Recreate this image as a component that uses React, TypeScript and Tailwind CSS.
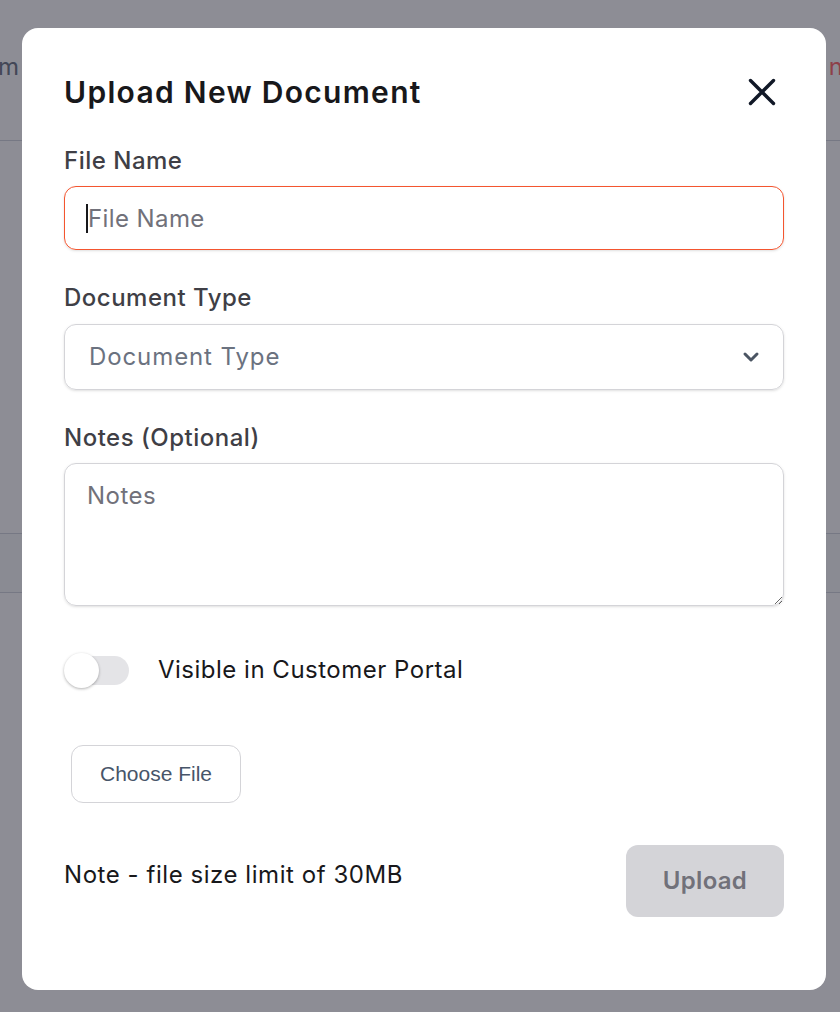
import React from 'react';
import { ChevronDown } from 'lucide-react';

const font = { fontFamily: 'Inter, "Noto Sans", sans-serif' };

export default function App() {
  return (
    <div className="relative w-[840px] h-[1012px] overflow-hidden bg-white" style={font}>
      {/* Page behind the overlay */}
      <div className="flex flex-col h-full">
        <div className="h-[141px] border-b border-gray-300 flex justify-between items-start pt-[52px]">
          <span className="text-[24px] text-gray-500 -ml-[2px] leading-[30px]">m</span>
          <span className="text-[24px] text-red-400 -mr-[3px] leading-[30px]">n</span>
        </div>
        <div className="h-[393px] border-b border-gray-300" />
        <div className="h-[59px] border-b border-gray-300 bg-gray-50" />
        <div className="flex-1" />
      </div>

      {/* Overlay */}
      <div className="absolute inset-0 bg-[#1c1c2b]/50 flex justify-start pl-[22px] pt-[28px]">
        <div className="w-[804px] h-[962px] bg-white rounded-[16px] px-[42px] pt-[46px] flex flex-col">
          {/* Header */}
          <div className="flex items-center justify-between">
            <h2 className="text-[30px] leading-[36px] font-semibold text-[#18181b] tracking-[1.3px]">
              Upload New Document
            </h2>
            <button className="mr-[7px] text-[#111827]">
              <svg width="30" height="30" viewBox="0 0 30 30" fill="none" stroke="currentColor" strokeWidth="3.4" strokeLinecap="round">
                <path d="M3.5 3.5 L26.5 26.5 M26.5 3.5 L3.5 26.5" />
              </svg>
            </button>
          </div>

          {/* File name */}
          <label className="mt-[37px] text-[24px] leading-[28px] font-medium text-[#3f3f46] tracking-[0.5px]">File Name</label>
          <div className="relative mt-[11px]">
            <input
              className="w-full h-[64px] rounded-[12px] border border-[#f4552f] px-[23px] text-[24px] tracking-[0.4px] text-[#18181b] placeholder:text-[#71717a] outline-none shadow-sm"
              style={font}
              placeholder="File Name"
            />
            <span className="absolute left-[22px] top-[18px] w-[2px] h-[29px] bg-[#18181b]" />
          </div>

          {/* Document type */}
          <label className="mt-[34px] text-[24px] leading-[28px] font-medium text-[#3f3f46] tracking-[0.5px]">Document Type</label>
          <div className="mt-[12px] h-[66px] rounded-[12px] border border-[#d4d4d8] shadow-sm flex items-center justify-between pl-[24px] pr-[20px]">
            <span className="text-[24px] text-[#6b7280] tracking-[0.9px]">Document Type</span>
            <ChevronDown className="w-[24px] h-[24px] text-[#4b5563]" strokeWidth={3} />
          </div>

          {/* Notes */}
          <label className="mt-[34px] text-[24px] leading-[28px] font-medium text-[#3f3f46] tracking-[0.5px]">Notes (Optional)</label>
          <textarea
            className="mt-[11px] h-[143px] rounded-[12px] border border-[#d4d4d8] px-[22px] py-[16px] text-[24px] leading-[32px] tracking-[0.5px] placeholder:text-[#71717a] outline-none shadow-sm"
            style={font}
            placeholder="Notes"
          />

          {/* Toggle */}
          <div className="mt-[46px] flex items-center">
            <div className="w-[65px] h-[36px] flex items-center">
              <div className="relative w-[62px] h-[29px] ml-[3px] rounded-full bg-[#e4e4e7]">
                <span className="absolute -left-[3px] -top-[3px] w-[35px] h-[35px] rounded-full bg-white shadow-[0_1px_3px_rgba(0,0,0,0.3)]" />
              </div>
            </div>
            <span className="ml-[29px] text-[24px] text-[#18181b] tracking-[0.5px]">Visible in Customer Portal</span>
          </div>

          {/* Choose file */}
          <div className="mt-[57px] ml-[7px]">
            <button
              className="w-[170px] h-[58px] rounded-[12px] border border-[#d4d4d8] text-[21px] text-[#475569]"
              style={{ fontFamily: '"Liberation Sans", Arial, sans-serif' }}
            >
              Choose File
            </button>
          </div>

          {/* Footer */}
          <div className="mt-[42px] flex items-start justify-between">
            <span className="mt-[15px] text-[24px] leading-[30px] text-[#18181b] tracking-[0.55px]">Note - file size limit of 30MB</span>
            <button className="w-[158px] h-[72px] rounded-[12px] bg-[#d4d4d8] text-[24px] font-semibold text-[#71717a] tracking-[0.3px]">
              Upload
            </button>
          </div>
        </div>
      </div>
    </div>
  );
}
